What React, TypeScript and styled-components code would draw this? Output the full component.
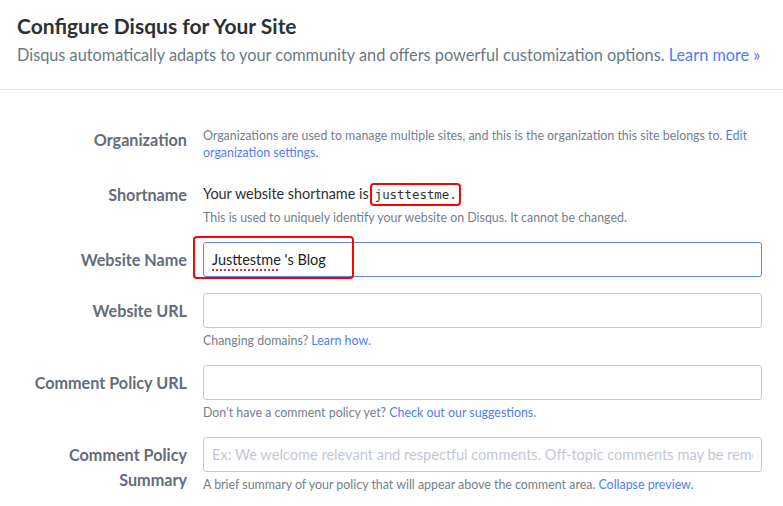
import React from "react";
import styled, { createGlobalStyle } from "styled-components";

const GlobalStyle = createGlobalStyle`
  body {
    margin: 0;
    background: #fff;
    font-family: Lato, "Liberation Sans", sans-serif;
    color: #2a2e2e;
  }
`;

const Page = styled.div`
  width: 783px;
`;

const Header = styled.header`
  padding: 12px 17px 22px;
  border-bottom: 1px solid #e7e9ee;
`;

const Title = styled.h1`
  margin: 0;
  font-size: 21px;
  line-height: 28px;
  font-weight: 700;
  color: #2e3133;
`;

const Subtitle = styled.p`
  margin: 3px 0 0;
  font-size: 16.3px;
  line-height: 24px;
  color: #687a86;
`;

const Link = styled.a`
  color: #4f7cff;
  text-decoration: none;
  cursor: pointer;
`;

const Form = styled.form`
  padding: 32px 21px 0 0;
  display: flex;
  flex-direction: column;
  gap: 16px;
`;

const Row = styled.div`
  display: grid;
  grid-template-columns: 187px 1fr;
  column-gap: 16px;
  align-items: start;
`;

const Label = styled.label`
  padding-top: 5px;
  text-align: right;
  font-size: 16.2px;
  line-height: 25px;
  font-weight: 700;
  color: #656c7a;
`;

const Field = styled.div`
  position: relative;
  display: flex;
  flex-direction: column;
`;

const Description = styled.p<{ $top?: number }>`
  margin: ${(p) => p.$top ?? 4}px 0 0;
  font-size: 12.4px;
  line-height: 17px;
  color: #73808c;
`;

const Statement = styled.p`
  margin: 4px 0 0;
  font-size: 14.4px;
  line-height: 25px;
  color: #2e3133;
`;

const Code = styled.code`
  position: relative;
  margin-left: 4px;
  padding: 0 2px;
  font-family: "DejaVu Sans Mono", "Liberation Mono", monospace;
  font-size: 12.4px;
  color: #2e3133;
`;

const Annotation = styled.span<{ $inset: string }>`
  position: absolute;
  box-sizing: border-box;
  inset: ${(p) => p.$inset};
  border: 2.5px solid #f00;
  border-radius: 4px;
  pointer-events: none;
`;

const Input = styled.input`
  box-sizing: border-box;
  width: 100%;
  height: 35px;
  padding: 0 8px;
  border: 1px solid #c7cad8;
  border-radius: 3px;
  font-family: inherit;
  font-size: 14.6px;
  color: #2a2e2e;
  outline: none;

  &::placeholder {
    color: #c4c7d3;
  }
`;

const FakeInput = styled.div`
  box-sizing: border-box;
  height: 35px;
  padding: 0 8px;
  display: flex;
  align-items: center;
  border: 1px solid #5c86ec;
  border-radius: 3px;
  font-size: 14.5px;
  color: #1f2224;
`;

const Misspelled = styled.span`
  text-decoration: underline dotted #e0322f;
  text-decoration-thickness: 2px;
  text-underline-offset: 4px;
`;

export default function App() {
  return (
    <Page>
      <GlobalStyle />
      <Header>
        <Title>Configure Disqus for Your Site</Title>
        <Subtitle>
          Disqus automatically adapts to your community and offers powerful customization options.{" "}
          <Link>Learn more »</Link>
        </Subtitle>
      </Header>

      <Form onSubmit={(e) => e.preventDefault()}>
        <Row>
          <Label>Organization</Label>
          <Field>
            <Description $top={5}>
              Organizations are used to manage multiple sites, and this is the organization this site belongs to.{" "}
              <Link>Edit organization settings.</Link>
            </Description>
          </Field>
        </Row>

        <Row>
          <Label>Shortname</Label>
          <Field>
            <Statement>
              Your website shortname is
              <Code>
                justtestme.
                <Annotation $inset="-4px -2px -4px -3px" />
              </Code>
            </Statement>
            <Description $top={2}>
              This is used to uniquely identify your website on Disqus. It cannot be changed.
            </Description>
          </Field>
        </Row>

        <Row>
          <Label>Website Name</Label>
          <Field>
            <FakeInput role="textbox">
              <Misspelled>Justtestme</Misspelled>&nbsp;'s Blog
            </FakeInput>
            <Annotation $inset="-6px auto -2px -10px" style={{ width: 161 }} />
          </Field>
        </Row>

        <Row>
          <Label>Website URL</Label>
          <Field>
            <Input type="text" />
            <Description>
              Changing domains? <Link>Learn how.</Link>
            </Description>
          </Field>
        </Row>

        <Row>
          <Label>Comment Policy URL</Label>
          <Field>
            <Input type="text" />
            <Description>
              Don't have a comment policy yet? <Link>Check out our suggestions.</Link>
            </Description>
          </Field>
        </Row>

        <Row>
          <Label>
            Comment Policy
            <br />
            Summary
          </Label>
          <Field>
            <Input
              type="text"
              placeholder="Ex: We welcome relevant and respectful comments. Off-topic comments may be removed."
            />
            <Description>
              A brief summary of your policy that will appear above the comment area.{" "}
              <Link>Collapse preview.</Link>
            </Description>
          </Field>
        </Row>
      </Form>
    </Page>
  );
}
